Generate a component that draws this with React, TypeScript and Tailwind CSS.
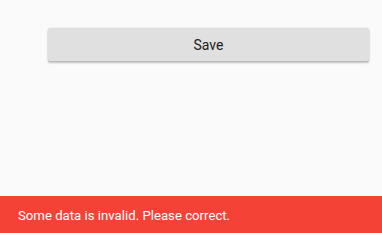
import React from 'react';

export default function App() {
  return (
    <div
      className="w-[382px] h-[233px] bg-[#fafafa] flex flex-col"
      style={{ fontFamily: 'Roboto, "Noto Sans", sans-serif' }}
    >
      <div className="flex-1 pt-[28px] pl-[48px] pr-[13px]">
        <button className="w-full h-[33px] pt-[2px] bg-[#e0e0e0] rounded-[2px] text-[14px] text-[#212121] shadow-[0_2px_2px_rgba(0,0,0,0.24),0_0_2px_rgba(0,0,0,0.12)]">
          Save
        </button>
      </div>
      <div className="h-[37px] bg-[#f44336] flex items-center px-[18px] pt-[2px] text-[13.2px] text-white">
        Some data is invalid. Please correct.
      </div>
    </div>
  );
}
